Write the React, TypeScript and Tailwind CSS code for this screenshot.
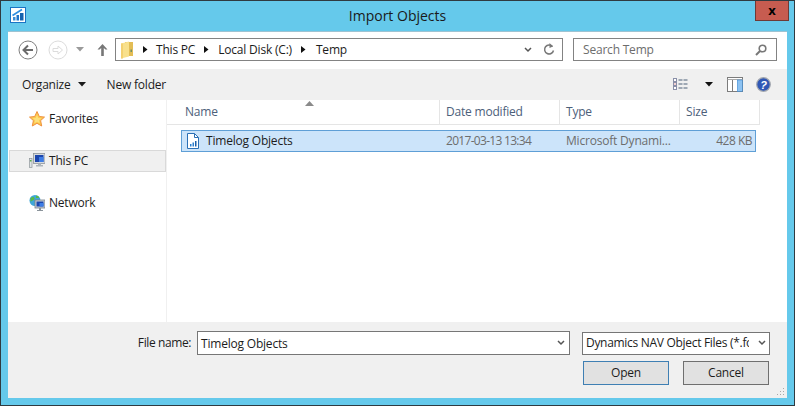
import React from "react";

const font = "font-['Open_Sans','Noto_Sans',sans-serif]";

const AppIcon = () => (
  <svg width="16" height="16" viewBox="0 0 16 16">
    <rect x="0.500" y="0.500" width="15" height="15" fill="#fff" stroke="#1a74c4" />
    <rect x="3" y="10" width="2.500" height="3.500" fill="#3a8ed6" />
    <rect x="6.500" y="8" width="2.500" height="5.500" fill="#1f74c8" />
    <rect x="10" y="6" width="3.500" height="7.500" fill="#1562ad" />
    <path d="M2.500 8.500 L8 5 L12 2.500" stroke="#2f8fe0" strokeWidth="1.700" fill="none" />
  </svg>
);

const NavCircle = ({ faded }: { faded?: boolean }) => {
  const c = faded ? "#dcdcdc" : "#7f7f7f";
  const a = faded ? "#dcdcdc" : "#6a6a6a";
  return (
    <svg width="20" height="20" viewBox="0 0 20 20">
      <circle cx="10" cy="10" r="9" fill="#fff" stroke={c} />
      {faded ? (
        <path d="M5 8.500h5V6l4.500 4-4.500 4v-2.500H5z" fill="#fff" stroke={a} />
      ) : (
        <path d="M15 10H6M10 5.500 5.500 10l4.500 4.500" fill="none" stroke={a} strokeWidth="2" />
      )}
    </svg>
  );
};

const Caret = ({ color = "#1a1a1a" }: { color?: string }) => (
  <svg width="8" height="5" viewBox="0 0 8 5">
    <path d="M0 0h8L4 4.500z" fill={color} />
  </svg>
);

const Chevron = () => (
  <svg width="8" height="6" viewBox="0 0 8 6">
    <path d="M1 1l3 3 3-3" fill="none" stroke="#555" strokeWidth="1.500" />
  </svg>
);

const Sep = () => (
  <svg width="5" height="7" viewBox="0 0 5 7">
    <path d="M0 0l4.500 3.500L0 7z" fill="#111" />
  </svg>
);

const FolderIcon = () => (
  <svg width="14" height="18" viewBox="0 0 14 18">
    <path d="M5 1h8v14H5z" fill="#e3bd55" />
    <path d="M1 2.500 9 .5V15.500L1 17.500z" fill="#f8e08c" />
    <path d="M1 2.500h2v15H1z" fill="#f3d071" />
    <rect x="10.500" y="8.500" width="1.500" height="2.500" fill="#6f8f6a" />
  </svg>
);

const StarIcon = () => (
  <svg width="16" height="16" viewBox="0 0 16 16">
    <path
      d="M8 .5l2.300 5 5.200.6-3.900 3.500 1.100 5.400L8 12.300 3.300 15l1.100-5.400L.5 6.100l5.200-.6z"
      fill="#fbc94f"
      stroke="#f0913f"
    />
    <path d="M8 4l1.300 3 3 .3-2.300 2 .6 3L8 10.800l-2.600 1.500.6-3-2.300-2 3-.3z" fill="#fde07a" />
  </svg>
);

const PcIcon = () => (
  <svg width="16" height="16" viewBox="0 0 16 16">
    <rect x=".5" y="5.500" width="2.500" height="9" fill="#dfe3e6" stroke="#8e9499" strokeWidth=".7" />
    <rect x="1" y="7" width="1.500" height="1.500" fill="#5bb04a" />
    <rect x="4.500" y=".5" width="11.500" height="10" fill="#d5dade" stroke="#8e9499" strokeWidth=".8" />
    <rect x="6" y="2" width="8.500" height="7" fill="#1c46ad" />
    <rect x="10" y="4" width="4.500" height="5" fill="#3d7de6" />
    <path d="M9 10.500h3V12h2v1.500H7V12h2z" fill="#aeb5bb" />
  </svg>
);

const NetworkIcon = () => (
  <svg width="16" height="17" viewBox="0 0 16 17">
    <circle cx="6" cy="5.500" r="5.500" fill="#3fa7d8" />
    <path d="M1.500 3c2-1.500 4-1.500 4 .5s-3 2-4 3.500zM7 .5c2 0 3 1 3 2.500H7z" fill="#58b947" />
    <rect x="6" y="5" width="10" height="8" fill="#c8ced3" stroke="#77818a" strokeWidth=".8" />
    <rect x="7.500" y="6.500" width="7" height="5" fill="#1c46ad" />
    <rect x="10.500" y="8" width="4" height="3.500" fill="#3d7de6" />
    <path d="M10 13h2v2h2v1H8v-1h2z" fill="#8b949b" />
  </svg>
);

const FileIcon = () => (
  <svg width="12" height="16" viewBox="0 0 12 16">
    <path d="M.5.500h7l4 4v11H.5z" fill="#fff" stroke="#2a6fb5" />
    <path d="M7.500.5v4h4" fill="none" stroke="#2a6fb5" />
    <rect x="3" y="11" width="1.500" height="2.500" fill="#2a7fd0" />
    <rect x="5.500" y="9.500" width="1.500" height="4" fill="#2a7fd0" />
    <rect x="8" y="8" width="1.500" height="5.500" fill="#1b5fa8" />
  </svg>
);

const ViewIcon = () => (
  <svg width="16" height="13" viewBox="0 0 16 13">
    <rect x=".5" y=".5" width="3" height="3" fill="#fff" stroke="#8a8fa8" />
    <rect x=".5" y="4.500" width="3" height="3" fill="#fff" stroke="#8a8fa8" />
    <rect x="1.500" y="5.500" width="1" height="1" fill="#d04a4a" />
    <rect x=".5" y="8.500" width="3" height="3" fill="#fff" stroke="#8a8fa8" />
    <path d="M5.500 2h10M5.500 6h10M5.500 10h10" stroke="#4c6078" strokeDasharray="4 1" />
  </svg>
);

const PaneIcon = () => (
  <svg width="16" height="15" viewBox="0 0 16 15">
    <rect x=".5" y=".5" width="15" height="14" fill="#fff" stroke="#7c7c7c" />
    <path d="M5.500 3v12" stroke="#7c7c7c" />
    <path d="M.5 2.500h15" stroke="#a8a8a8" />
    <rect x="10.300" y="3" width="5" height="11.300" fill="#8cc2f2" stroke="#3b8ad6" strokeWidth=".6" />
  </svg>
);

const HelpIcon = () => (
  <svg width="15" height="15" viewBox="0 0 15 15">
    <circle cx="7.500" cy="7.500" r="6.800" fill="#2f57b5" stroke="#a3a7ae" strokeWidth="1.200" />
    <text x="7.500" y="11.500" textAnchor="middle" fontSize="11" fontWeight="700" fontStyle="italic" fill="#fff" fontFamily="Liberation Sans">
      ?
    </text>
  </svg>
);

const NavItem = ({ icon, label, active }: { icon: React.ReactNode; label: string; active?: boolean }) => (
  <div className={`flex h-[22px] items-center gap-[4px] pl-[19px] text-[12px] border ${active ? "bg-[#f0f0f0] border-[#d9d9d9]" : "border-transparent"}`}>
    <span className="flex w-4 justify-center">{icon}</span>
    <span>{label}</span>
  </div>
);

const Column = ({ label, width }: { label: string; width: string }) => (
  <div className={`${width} flex items-center pl-[6px] border-r border-[#e5e5e5] text-[#4c607a]`}>{label}</div>
);

const App = () => {
  return (
    <div className={`${font} w-[795px] h-[406px] overflow-hidden flex flex-col bg-[#65c9eb] border border-[#2f3a40] text-[12px] tracking-[-0.2px] text-[#1c1c1c]`}>
      {/* title bar */}
      <div className="h-[30px] shrink-0 grid grid-cols-[1fr_auto_1fr]">
        <div className="pl-[9px] pt-[6px]">
          <AppIcon />
        </div>
        <div className="pt-[5px] text-[14px] leading-[20px] tracking-normal text-[#1a1a1a]">Import Objects</div>
        <div className="flex justify-end pr-[5px]">
          <div className="w-[34px] h-[21px] -mt-px bg-[#c75c50] border border-[#6e3a36] flex items-center justify-center text-[13px] font-bold leading-none text-black">
            x
          </div>
        </div>
      </div>

      <div className="mx-[7px] mb-[7px] flex-1 min-h-0 flex flex-col border-t border-[#9ec3d2]">
        {/* address row */}
        <div className="h-[37px] shrink-0 bg-white flex items-center pb-[2px] pl-[10px] pr-[10px]">
          <NavCircle />
          <span className="w-[10px]" />
          <NavCircle faded />
          <span className="ml-[8px]">
            <Caret color="#9a9a9a" />
          </span>
          <svg className="ml-[13px]" width="11" height="12" viewBox="0 0 11 12">
            <path d="M5.500 0 10.500 5.500 8.500 5.500 6.800 4V12H4.200V4L2.500 5.500.5 5.500z" fill="#777" />
          </svg>
          <div className="ml-[7px] w-[448px] h-[23px] border border-[#838383] flex items-center pl-[4px] pr-[7px]">
            <FolderIcon />
            <span className="ml-[9px]"><Sep /></span>
            <span className="ml-[8px]">This PC</span>
            <span className="ml-[9px]"><Sep /></span>
            <span className="ml-[9px]">Local Disk (C:)</span>
            <span className="ml-[9px]"><Sep /></span>
            <span className="ml-[10px]">Temp</span>
            <span className="ml-auto"><Chevron /></span>
            <svg className="ml-[11px]" width="12" height="13" viewBox="0 0 12 13">
              <path d="M9.500 3.500A4.500 4.500 0 1 0 10.500 7.500" fill="none" stroke="#777" strokeWidth="1.500" />
              <path d="M6.500 0v5l3.500-1.500z" fill="#777" />
            </svg>
          </div>
          <div className="ml-[10px] w-[204px] h-[23px] border border-[#838383] flex items-center pl-[9px] pr-[9px] text-[#6d6d6d]">
            <span>Search Temp</span>
            <svg className="ml-auto" width="12" height="12" viewBox="0 0 12 12">
              <circle cx="7.500" cy="4.500" r="3.300" fill="none" stroke="#777" strokeWidth="1.600" />
              <path d="M5 7 1 11" stroke="#777" strokeWidth="2" />
            </svg>
          </div>
        </div>

        {/* toolbar */}
        <div className="h-[31px] shrink-0 bg-[#f0f0f0] flex items-center pl-[14px] pr-[16px]">
          <span>Organize</span>
          <span className="ml-[7px]"><Caret /></span>
          <span className="ml-[21px]">New folder</span>
          <span className="ml-auto"><ViewIcon /></span>
          <span className="ml-[16px]"><Caret color="#111" /></span>
          <span className="ml-[14px]"><PaneIcon /></span>
          <span className="ml-[13px]"><HelpIcon /></span>
        </div>

        {/* main */}
        <div className="flex-1 min-h-0 bg-white flex">
          <div className="w-[159px] shrink-0 border-r border-[#f0f0f0] pt-[8px] pl-px flex flex-col">
            <NavItem icon={<StarIcon />} label="Favorites" />
            <div className="h-[20px]" />
            <NavItem icon={<PcIcon />} label="This PC" active />
            <div className="h-[20px]" />
            <NavItem icon={<NetworkIcon />} label="Network" />
          </div>
          <div className="flex-1 min-w-0">
            <div className="relative h-[25px] flex border-b border-[#e5e5e5] w-[593px]">
              <svg className="absolute left-[138px] top-[1px]" width="9" height="5" viewBox="0 0 9 5">
                <path d="M0 5 4.500 0 9 5z" fill="#8a8a8a" />
              </svg>
              <div className="w-[273px] flex items-center pl-[18px] border-r border-[#e5e5e5] text-[#4c607a]">Name</div>
              <Column label="Date modified" width="w-[120px]" />
              <Column label="Type" width="w-[120px]" />
              <Column label="Size" width="w-[80px]" />
            </div>
            <div className="ml-[14px] mt-[5px] w-[575px] h-[22px] bg-[#cce4fa] border border-[#5f9fd6] flex items-center text-[#6d6d6d]">
              <div className="w-[258px] flex items-center pl-[5px] gap-[7px] text-[#1c1c1c]">
                <FileIcon />
                <span>Timelog Objects</span>
              </div>
              <div className="w-[120px] pl-[6px] tracking-[-0.7px]">2017-03-13 13:34</div>
              <div className="w-[120px] pl-[6px]">Microsoft Dynami...</div>
              <div className="flex-1 text-right pr-[3px] tracking-[-0.5px]">428 KB</div>
            </div>
          </div>
        </div>

        {/* bottom */}
        <div className="relative h-[76px] shrink-0 bg-[#f0f0f0] pt-[9px] pl-[130px]">
          <div className="flex items-center h-[24px]">
            <span className="w-[53px] flex justify-end whitespace-nowrap tracking-[-0.4px]">File name:</span>
            <div className="ml-[6px] w-[373px] h-[24px] bg-white border border-[#767676] flex items-center pl-[3px] pr-[4px]">
              <span className="pt-px">Timelog Objects</span>
              <span className="ml-auto"><Chevron /></span>
            </div>
            <div className="ml-[12px] w-[188px] h-[23px] bg-white border border-[#767676] flex items-center pl-[3px] pr-[3px]">
              <span className="w-[163px] overflow-hidden whitespace-nowrap tracking-[-0.3px]">Dynamics NAV Object Files (*.fob)</span>
              <span className="ml-auto"><Chevron /></span>
            </div>
          </div>
          <div className="flex mt-[6px] ml-[445px] gap-[14px]">
            <div className="w-[86px] h-[24px] bg-[#e1e1e1] border border-[#3f7fb3] flex items-center justify-center">Open</div>
            <div className="w-[86px] h-[24px] bg-[#e1e1e1] border border-[#6f6f6f] flex items-center justify-center">Cancel</div>
          </div>
          <svg className="absolute right-[2px] bottom-[2px]" width="8" height="8" viewBox="0 0 8 8">
            <path d="M6 0h1v1H6zM3 3h1v1H3zM6 3h1v1H6zM0 6h1v1H0zM3 6h1v1H3zM6 6h1v1H6z" fill="#a8a8a8" />
          </svg>
        </div>
      </div>
    </div>
  );
};

export default App;
